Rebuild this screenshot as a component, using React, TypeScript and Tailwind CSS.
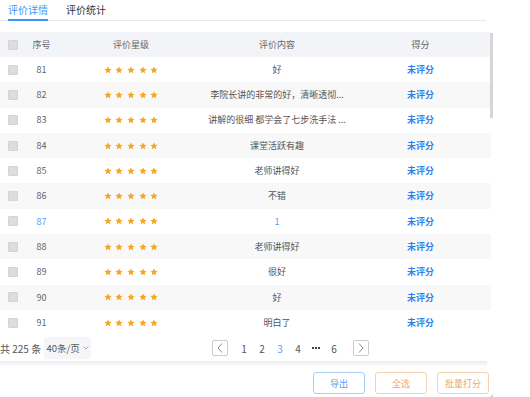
import React from "react";

const rows: { n: number; c: string; hl?: boolean }[] = [
  { n: 81, c: "好" },
  { n: 82, c: "李院长讲的非常的好，清晰透彻..." },
  { n: 83, c: "讲解的很细 都学会了七步洗手法 ..." },
  { n: 84, c: "课堂活跃有趣" },
  { n: 85, c: "老师讲得好" },
  { n: 86, c: "不错" },
  { n: 87, c: "1", hl: true },
  { n: 88, c: "老师讲得好" },
  { n: 89, c: "很好" },
  { n: 90, c: "好" },
  { n: 91, c: "明白了" },
];

function Star() {
  return (
    <svg width="8" height="8" viewBox="0 0 24 24">
      <path
        d="M12 1.5l3.2 7 7.6.8-5.7 5.1 1.6 7.5L12 18l-6.7 3.9 1.6-7.5L1.2 9.3l7.6-.8z"
        fill="#f5a623"
      />
    </svg>
  );
}

function Stars() {
  return (
    <div className="flex items-center justify-center gap-[3.7px]">
      <Star />
      <Star />
      <Star />
      <Star />
      <Star />
    </div>
  );
}

function Check() {
  return <div className="w-[10px] h-[10px] bg-[#dddddd] border border-[#d4d4d4] rounded-[1px]" />;
}

const grid = "grid grid-cols-[25px_33px_146px_146px_141px] items-center";

export default function App() {
  return (
    <div
      className="w-[530px] h-[397px] bg-white overflow-hidden relative text-[#666]"
      style={{ fontFamily: "'Noto Sans CJK SC', 'Noto Sans', sans-serif" }}
    >
      {/* tabs */}
      <div className="flex items-end h-[21px] w-[486px] border-b border-[#e4e8ef] pl-[8px] gap-[18px]">
        <div className="text-[10px] leading-none text-[#3f95f6] border-b-2 border-[#3f95f6] pb-[4px] mb-[-1px]">
          评价详情
        </div>
        <div className="text-[10px] leading-none text-[#333] pb-[5px]">评价统计</div>
      </div>

      {/* table */}
      <div className="relative mt-[11px] w-[493px]">
        <div className="absolute right-[0px] top-[1px] w-[3px] h-[85px] bg-[#d6d6d6]" />
        <div className={`${grid} h-[25px] bg-[#f2f4f8] text-[9px] text-[#666] w-[491px]`}>
          <div className="flex justify-center">
            <Check />
          </div>
          <div className="text-center">序号</div>
          <div className="text-center">评价星级</div>
          <div className="text-center">评价内容</div>
          <div className="text-center">得分</div>
        </div>
        {rows.map((r, i) => (
          <div
            key={r.n}
            className={`${grid} h-[25.3px] text-[9px] w-[491px] ${i % 2 === 1 ? "bg-[#f8f8f8]" : "bg-white"}`}
          >
            <div className="flex justify-center">
              <Check />
            </div>
            <div className={`text-center ${r.hl ? "text-[#5d9df5]" : "text-[#666]"}`}>{r.n}</div>
            <Stars />
            <div className={`text-center ${r.hl ? "text-[#5d9df5]" : "text-[#555]"}`}>{r.c}</div>
            <div className="text-center font-bold text-[#2f7eef]">未评分</div>
          </div>
        ))}
      </div>

      {/* footer / pagination */}
      <div className="flex items-center h-[26px] text-[10px] text-[#555]">
        <div className="whitespace-nowrap">共 225 条</div>
        <div className="ml-[3px] w-[47px] h-[22px] bg-[#f4f6fa] flex items-center justify-center gap-[3px] text-[#555] text-[9.5px]">
          <span>40条/页</span>
          <svg width="6" height="4" viewBox="0 0 6 4">
            <path d="M0.5 0.5L3 3L5.5 0.5" stroke="#999" fill="none" strokeWidth="0.8" />
          </svg>
        </div>
        <div className="ml-[121px] w-[16px] h-[16px] border border-[#c8ccd4] rounded-[2px] flex items-center justify-center">
          <svg width="6" height="10" viewBox="0 0 6 10">
            <path d="M5 0.5L1 5L5 9.5" stroke="#888" fill="none" strokeWidth="1" />
          </svg>
        </div>
        <div className="ml-[7px] flex items-center">
          {["1", "2", "3", "4", "...", "6"].map((p) =>
            p === "..." ? (
              <div key={p} className="w-[18px] flex justify-center items-center gap-[1px]">
                <div className="w-[2px] h-[2px] bg-[#444]" />
                <div className="w-[2px] h-[2px] bg-[#444]" />
                <div className="w-[2px] h-[2px] bg-[#444]" />
              </div>
            ) : (
              <div
                key={p}
                className={`w-[18px] text-center text-[10px] ${p === "3" ? "text-[#5d9df5]" : "text-[#555]"}`}
              >
                {p}
              </div>
            )
          )}
        </div>
        <div className="ml-[10px] w-[16px] h-[16px] border border-[#c8ccd4] rounded-[2px] flex items-center justify-center">
          <svg width="6" height="10" viewBox="0 0 6 10">
            <path d="M1 0.5L5 5L1 9.5" stroke="#888" fill="none" strokeWidth="1" />
          </svg>
        </div>
      </div>

      <div className="w-[487px] h-[6px] bg-gradient-to-b from-[#ececec] to-white" />

      {/* buttons */}
      <div className="mt-[5px] flex justify-end pr-[41px] gap-[10px] text-[9px]">
        <div className="w-[52px] h-[22px] rounded-[3px] border border-[#a9cdf9] text-[#5a9cf2] flex items-center justify-center">
          导出
        </div>
        <div className="w-[52px] h-[22px] rounded-[3px] border border-[#f5d3b2] text-[#f0a86a] flex items-center justify-center">
          全选
        </div>
        <div className="w-[52px] h-[22px] rounded-[3px] border border-[#f5d3b2] text-[#f0a86a] flex items-center justify-center">
          批量打分
        </div>
      </div>
      <div className="absolute left-[490px] top-[390px] text-[7px] text-[#999] leading-none">⌟</div>
    </div>
  );
}
